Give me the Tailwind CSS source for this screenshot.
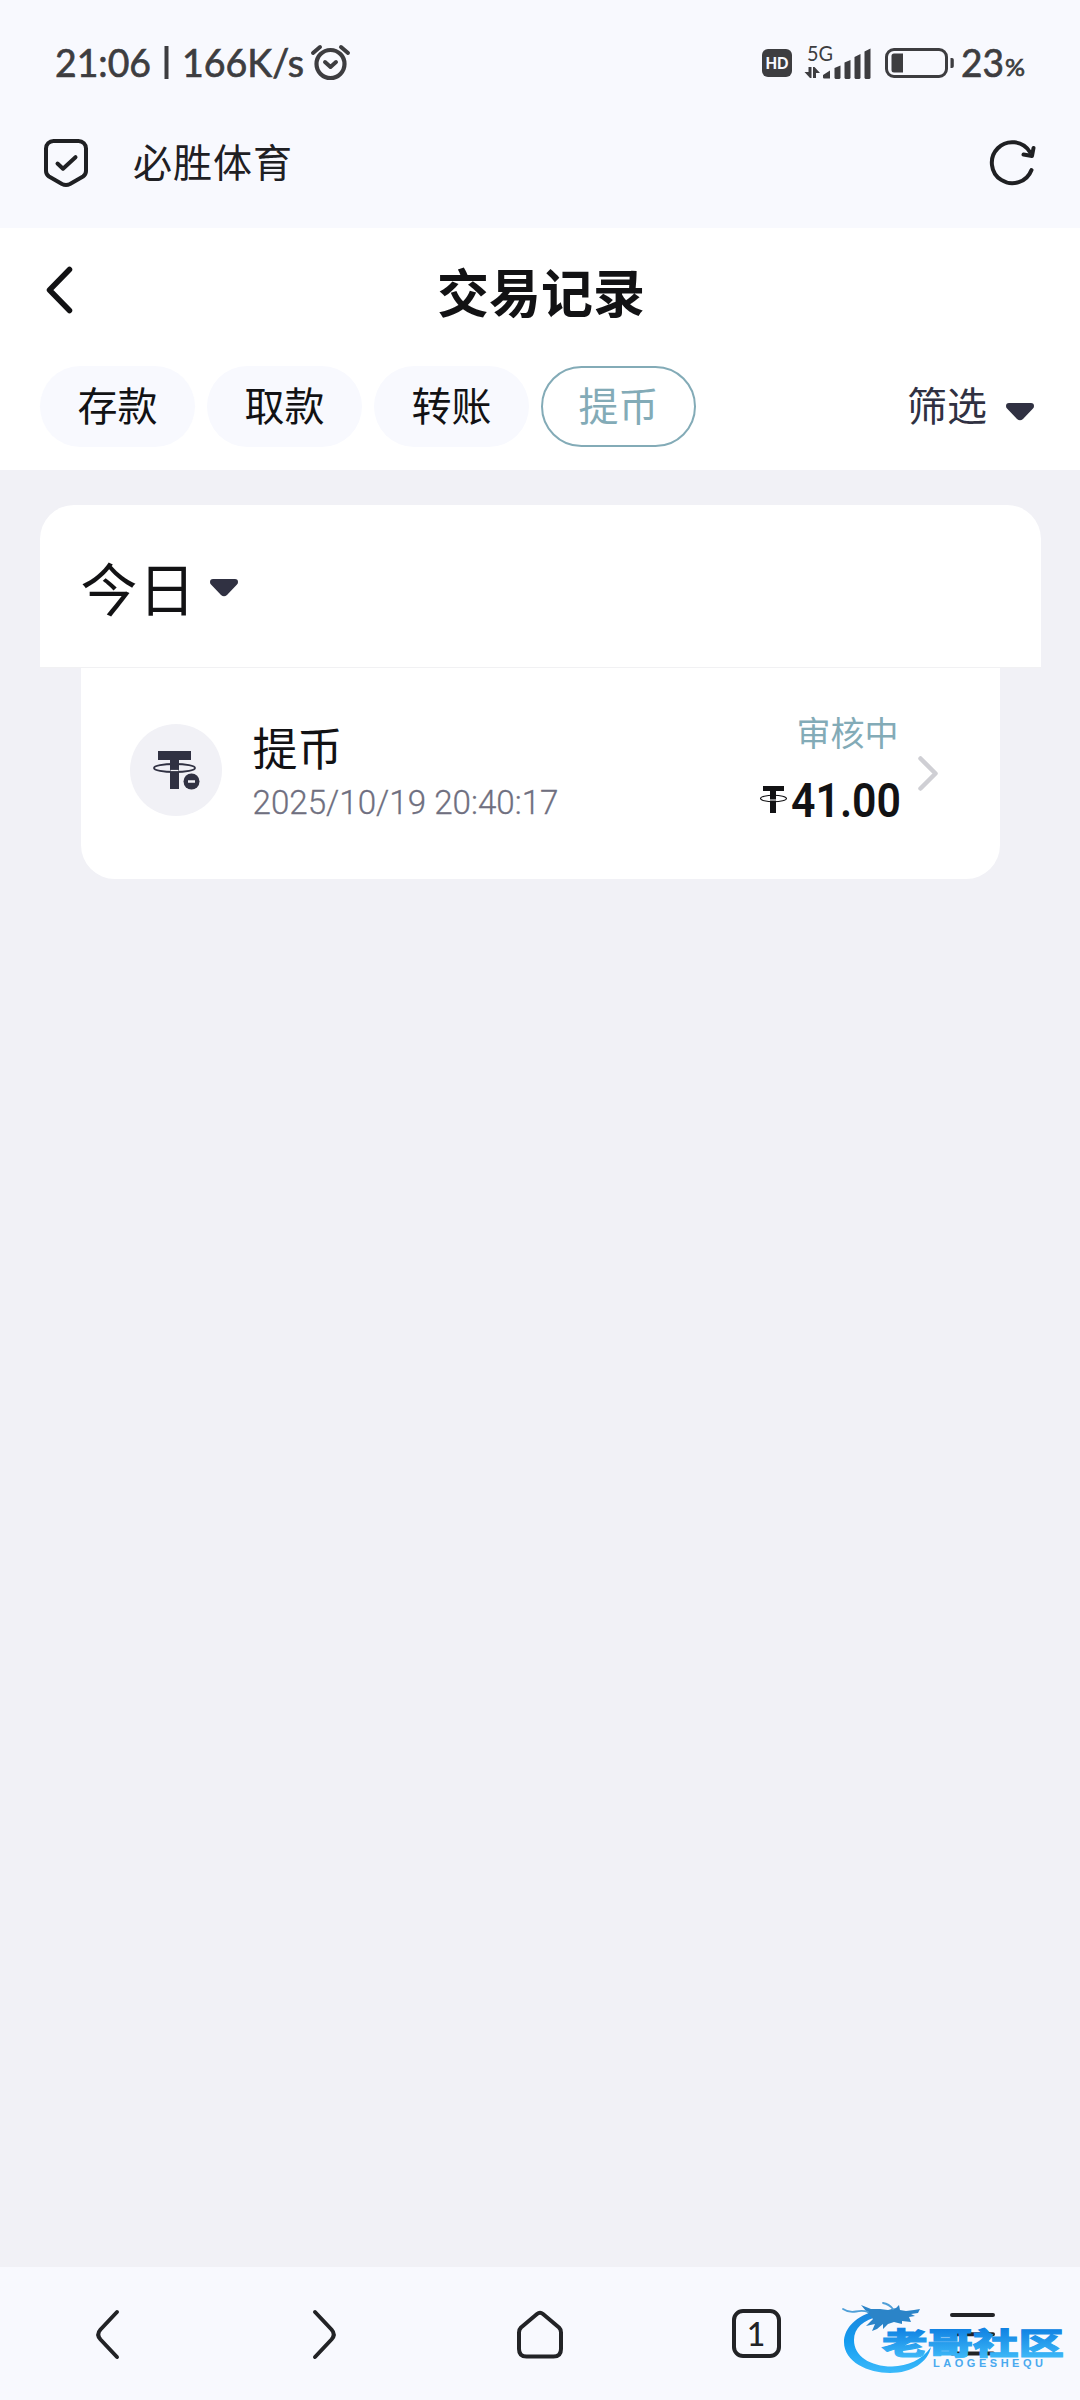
<!DOCTYPE html>
<html lang="zh-CN">
<head>
<meta charset="utf-8">
<title>交易记录</title>
<script src="https://cdn.jsdelivr.net/npm/@tailwindcss/browser@4"></script>
</head>
<body class="bg-[#f1f1f6]">
<div class="flex h-[2400px] w-[1080px] flex-col overflow-hidden bg-[#f1f1f6] font-['Noto_Sans_CJK_SC',sans-serif] text-[#121214]">

  <!-- Status bar -->
  <div class="flex h-[126px] items-center justify-between bg-[#f8f9fe] pr-[54px] pl-[54px] text-[#3d3d40]">
    <svg class="h-[126px] w-[300px]" viewBox="54 0 300 126" fill="none" stroke="currentColor">
      <g fill="currentColor" stroke="currentColor" stroke-width=".7" font-family="Lato, sans-serif" font-size="39" font-weight="400">
        <text x="55" y="77" textLength="96" lengthAdjust="spacingAndGlyphs">21:06</text>
        <text x="182" y="77" textLength="122" lengthAdjust="spacingAndGlyphs">166K/s</text>
      </g>
      <path d="M166.500 46v33" stroke-width="4"/>
      <circle cx="330.500" cy="64" r="14" stroke-width="4.200"/>
      <path d="M325 62l5.500 5 5.500-5M313 53l7-6M348 53l-7-6" stroke-width="4" stroke-linecap="round" stroke-linejoin="round"/>
    </svg>
    <svg class="h-[126px] w-[270px]" viewBox="756 0 270 126" fill="currentColor">
      <rect x="762" y="49" width="30" height="28" rx="6"/>
      <text x="765.500" y="69" fill="#f8f9fe" font-family="Lato, sans-serif" font-size="17" font-weight="900" textLength="23" lengthAdjust="spacingAndGlyphs">HD</text>
      <text x="807" y="61" font-family="Lato, sans-serif" font-size="20.500" font-weight="400" textLength="26" lengthAdjust="spacingAndGlyphs">5G</text>
      <path d="M808.500 67h3v11h-1.500l-5.500-6h4zM813 78V67h1.500l5.500 6h-4v5z"/>
      <path d="M823 76.500v-1.500l7-4.500v8h-5.500a1.500 1.500 0 0 1-1.500-2zM834.500 68l6-2.500V78l-1 1h-4l-1-1zM844.500 62.500l6-2.500v18l-1 1h-4l-1-1zM854.500 57l6-3v24l-1 1h-4l-1-1zM864.500 51.500l6-3V78l-1 1h-4l-1-1z"/>
      <rect x="886.500" y="49.500" width="60" height="27" rx="7.500" fill="none" stroke="currentColor" stroke-width="3"/>
      <path d="M894 53.500h9v19h-9a2.500 2.500 0 0 1-2.500-2.500v-14a2.500 2.500 0 0 1 2.500-2.500zM950.500 58h1.500a1.800 1.800 0 0 1 1.800 1.800v6.400a1.800 1.800 0 0 1-1.800 1.800h-1.500z"/>
      <g font-family="Lato, sans-serif" stroke="currentColor" stroke-width=".7" font-weight="400">
        <text x="961" y="77" font-size="39" textLength="43" lengthAdjust="spacingAndGlyphs">23</text>
        <text x="1005" y="76" font-size="23" textLength="20" lengthAdjust="spacingAndGlyphs">%</text>
      </g>
    </svg>
  </div>

  <!-- Browser address bar -->
  <div class="flex h-[102px] items-start bg-[#f8f9fe] pr-[42px] pl-[42px] text-[#1f2023]">
    <svg class="mt-[10px] h-[52px] w-[48px]" viewBox="42 136 48 52" fill="none" stroke="currentColor" stroke-width="4" stroke-linecap="round" stroke-linejoin="round">
      <path d="M53.500 141h25a7.500 7.500 0 0 1 7.500 7.500v22.500q0 3.500-3 5.500l-13 7.500q-4 2-8 0l-13-7.500q-3-2-3-5.500v-22.500a7.500 7.500 0 0 1 7.500-7.500z"/>
      <path d="M57.500 163.500l5.500 5.200 12.500-11.500"/>
    </svg>
    <div class="mt-[6px] ml-[43px] text-[39px] leading-[56px] tracking-[1px]">必胜体育</div>
    <svg class="mt-[11px] ml-auto h-[50px] w-[50px]" viewBox="988 137 50 50" fill="none" stroke="currentColor" stroke-width="4" stroke-linecap="round" stroke-linejoin="round">
      <path d="M1031.500 170a20.500 20.500 0 1 1-2-18.500M1023.500 154.500l8.500 1.500 1.500-8"/>
    </svg>
  </div>

  <!-- Page header -->
  <header class="flex h-[242px] flex-col bg-white">
    <div class="grid h-[138px] grid-cols-[200px_1fr_200px] items-center">
      <svg class="mt-[-14px] ml-[44px] h-[50px] w-[32px]" viewBox="44 265 32 50" fill="none" stroke="currentColor" stroke-width="5.500" stroke-linecap="round" stroke-linejoin="round"><path d="M69.500 269.500L49.500 290l20 20.500"/></svg>
      <h1 class="mt-[-12px] pl-0.5 text-center text-[52px] leading-[70px] font-bold">交易记录</h1>
    </div>
    <div class="flex h-[81px] items-center gap-3 pr-[46px] pl-[40px] text-[40px] leading-[60px]">
      <div class="flex h-[81px] w-[155px] items-center justify-center rounded-full bg-[#f8f9fe] pb-1.5">存款</div>
      <div class="flex h-[81px] w-[155px] items-center justify-center rounded-full bg-[#f8f9fe] pb-1.5">取款</div>
      <div class="flex h-[81px] w-[155px] items-center justify-center rounded-full bg-[#f8f9fe] pb-1.5">转账</div>
      <div class="flex h-[81px] w-[155px] items-center justify-center rounded-full border-2 border-[#83abb7] pb-1.5 text-[#83abb7]">提币</div>
      <div class="ml-auto flex items-center gap-[19px] pb-1.5 text-[#303142]">筛选
        <svg class="mt-4 h-[18px] w-[28px]" viewBox="0 0 28 18" fill="#303142"><path d="M3 0h22q3 0 3 3 0 1.500-1 2.500L17 16q-3 2.500-6 0L1 5.500Q0 4.500 0 3q0-3 3-3z"/></svg>
      </div>
    </div>
  </header>

  <!-- Records -->
  <main class="flex flex-1 flex-col items-center pt-[35px]">
    <section class="flex h-[163px] w-[1001px] items-center gap-[13px] rounded-t-[34px] border-b border-[#f1f1f3] bg-white pl-[41px]">
      <h2 class="text-[57px] leading-[80px] tracking-[1px]">今日</h2>
      <svg class="mt-1 h-[18px] w-[28px]" viewBox="0 0 28 18" fill="#303142"><path d="M3 0h22q3 0 3 3 0 1.500-1 2.500L17 16q-3 2.500-6 0L1 5.500Q0 4.500 0 3q0-3 3-3z"/></svg>
    </section>
    <section class="flex h-[211px] w-[919px] items-start rounded-b-[34px] bg-white pr-[60px] pl-[49px]">
      <svg class="mt-[56px] h-[92px] w-[92px]" viewBox="130 724 92 92" fill="#303142">
        <circle cx="176" cy="770" r="46" fill="#f1f1f6"/>
        <path d="M158 751h33v9h-12v29h-9v-29h-12z"/>
        <ellipse cx="174.500" cy="768" rx="20.500" ry="4" fill="none" stroke="#303142" stroke-width="1.800"/>
        <path d="M170.500 770.500h8" stroke="#f1f1f6" stroke-width="1.200"/>
        <circle cx="191.500" cy="781.500" r="8"/><path d="M188 781.500h7" stroke="#f1f1f6" stroke-width="2.500"/>
      </svg>
      <div class="mt-[46px] ml-[31px] flex flex-col">
        <div class="text-[45px] leading-[66px]">提币</div>
        <svg class="h-[44px] w-[320px] overflow-visible" viewBox="252 780 320 44"><text x="251.500" y="814" fill="#6f6f80" stroke="#6f6f80" stroke-width=".3" font-family="Roboto, sans-serif" font-size="34" font-weight="300" textLength="306" lengthAdjust="spacingAndGlyphs">2025/10/19 20:40:17</text></svg>
      </div>
      <div class="mt-[38px] ml-auto flex flex-col items-end">
        <div class="mr-[2px] text-[34px] leading-[52px] text-[#83abb7]">审核中</div>
        <svg class="mt-[17px] h-[50px] w-[144px] overflow-visible" viewBox="757 775 144 50" fill="#121214">
          <path d="M763 786h21v5h-8v22h-6v-22h-7z"/>
          <ellipse cx="773.500" cy="798.500" rx="13" ry="3.300" fill="none" stroke="#121214" stroke-width="1.100"/>
          <path d="M770 800h6" stroke="#fff"/>
          <text x="791" y="817" font-family="Roboto, sans-serif" font-size="49" font-weight="600" textLength="110" lengthAdjust="spacingAndGlyphs">41.00</text>
        </svg>
      </div>
      <svg class="mt-[86px] ml-[15px] h-[38px] w-[24px]" viewBox="916 754 24 38" fill="none" stroke="#cfcfd4" stroke-width="4.500" stroke-linecap="round" stroke-linejoin="round"><path d="M920.500 758.500L935.500 773.500l-15 15"/></svg>
    </section>
  </main>

  <!-- Browser toolbar -->
  <nav class="relative grid h-[133px] grid-cols-5 place-items-center bg-[#f8f9fe] text-[#222326]">
    <svg class="h-[54px] w-[54px]" viewBox="0 0 54 54" fill="none" stroke="currentColor" stroke-width="4" stroke-linecap="round" stroke-linejoin="round"><path d="M36 5L19.500 22.500Q15 27.500 19.500 32.500L36 50"/></svg>
    <svg class="h-[54px] w-[54px]" viewBox="0 0 54 54" fill="none" stroke="currentColor" stroke-width="4" stroke-linecap="round" stroke-linejoin="round"><path d="M18 5l16.500 17.500Q39 27.500 34.500 32.500L18 50"/></svg>
    <svg class="h-[54px] w-[54px]" viewBox="0 0 54 54" fill="none" stroke="currentColor" stroke-width="4" stroke-linejoin="round"><path d="M24 7q3-2.500 6 0l16 13.500q2 2 2 5v16.500q0 7.500-7.500 7.500h-27Q6 49.500 6 42V25.500q0-3 2-5z"/></svg>
    <div class="flex h-[49px] w-[49px] items-center justify-center rounded-[11px] border-4 border-current font-['Lato',sans-serif] text-[32px] leading-none font-medium">1</div>
    <svg class="h-[54px] w-[54px]" viewBox="0 0 54 54" fill="none" stroke="currentColor" stroke-width="4" stroke-linecap="round"><path d="M7 8h41M7 27.300h41M7 46.500h41"/></svg>

    <!-- Community badge -->
    <svg class="absolute top-[20px] left-[836px] h-[96px] w-[240px]" viewBox="836 2287 240 96">
      <defs>
        <linearGradient id="ring" x1="0" y1="0" x2="0" y2="1"><stop offset="0" stop-color="#1c86dc"/><stop offset=".5" stop-color="#149cf0"/><stop offset="1" stop-color="#3bbafb"/></linearGradient>
        <linearGradient id="word" x1="0" y1="0" x2="0" y2="1"><stop offset=".2" stop-color="#0f80e2"/><stop offset="1" stop-color="#45c2fb"/></linearGradient>
      </defs>
      <path fill="url(#ring)" d="M874 2311C852 2318 844 2331 844 2342C844 2362 868 2373 890 2373C912 2373 928 2362 931 2347C922 2360 908 2366 892 2366.500C870 2366.500 854 2356 854 2340C854 2328 863 2320 880 2316z"/>
      <path fill="#2b84c8" d="M866 2311l-5-6 10 4 9 0 8 1 8-2 3-3 1 5 6 1 8-1 6-1-2 4-7 1 4 2-6 1 2 5-9-1 0 3-8-2-6 2-5 5 0-5-6 5-5 2 3-7-9 2 7-7z"/>
      <path fill="none" stroke="#4f9fd8" stroke-width="1.800" stroke-linecap="round" d="M843 2309q6 4 13 2.500t12 .5M893 2309q-4-5-10-6"/>
      <text x="882" y="2354" fill="url(#word)" stroke="url(#word)" stroke-width="1" font-family="'Noto Sans CJK SC', sans-serif" font-size="30" font-weight="900" textLength="182" lengthAdjust="spacingAndGlyphs">老哥社区</text>
      <text x="933" y="2367" fill="#4aa9ef" font-family="'Liberation Sans', sans-serif" font-size="11" font-weight="700" textLength="110">LAOGESHEQU</text>
    </svg>
  </nav>
</div>
</body>
</html>
